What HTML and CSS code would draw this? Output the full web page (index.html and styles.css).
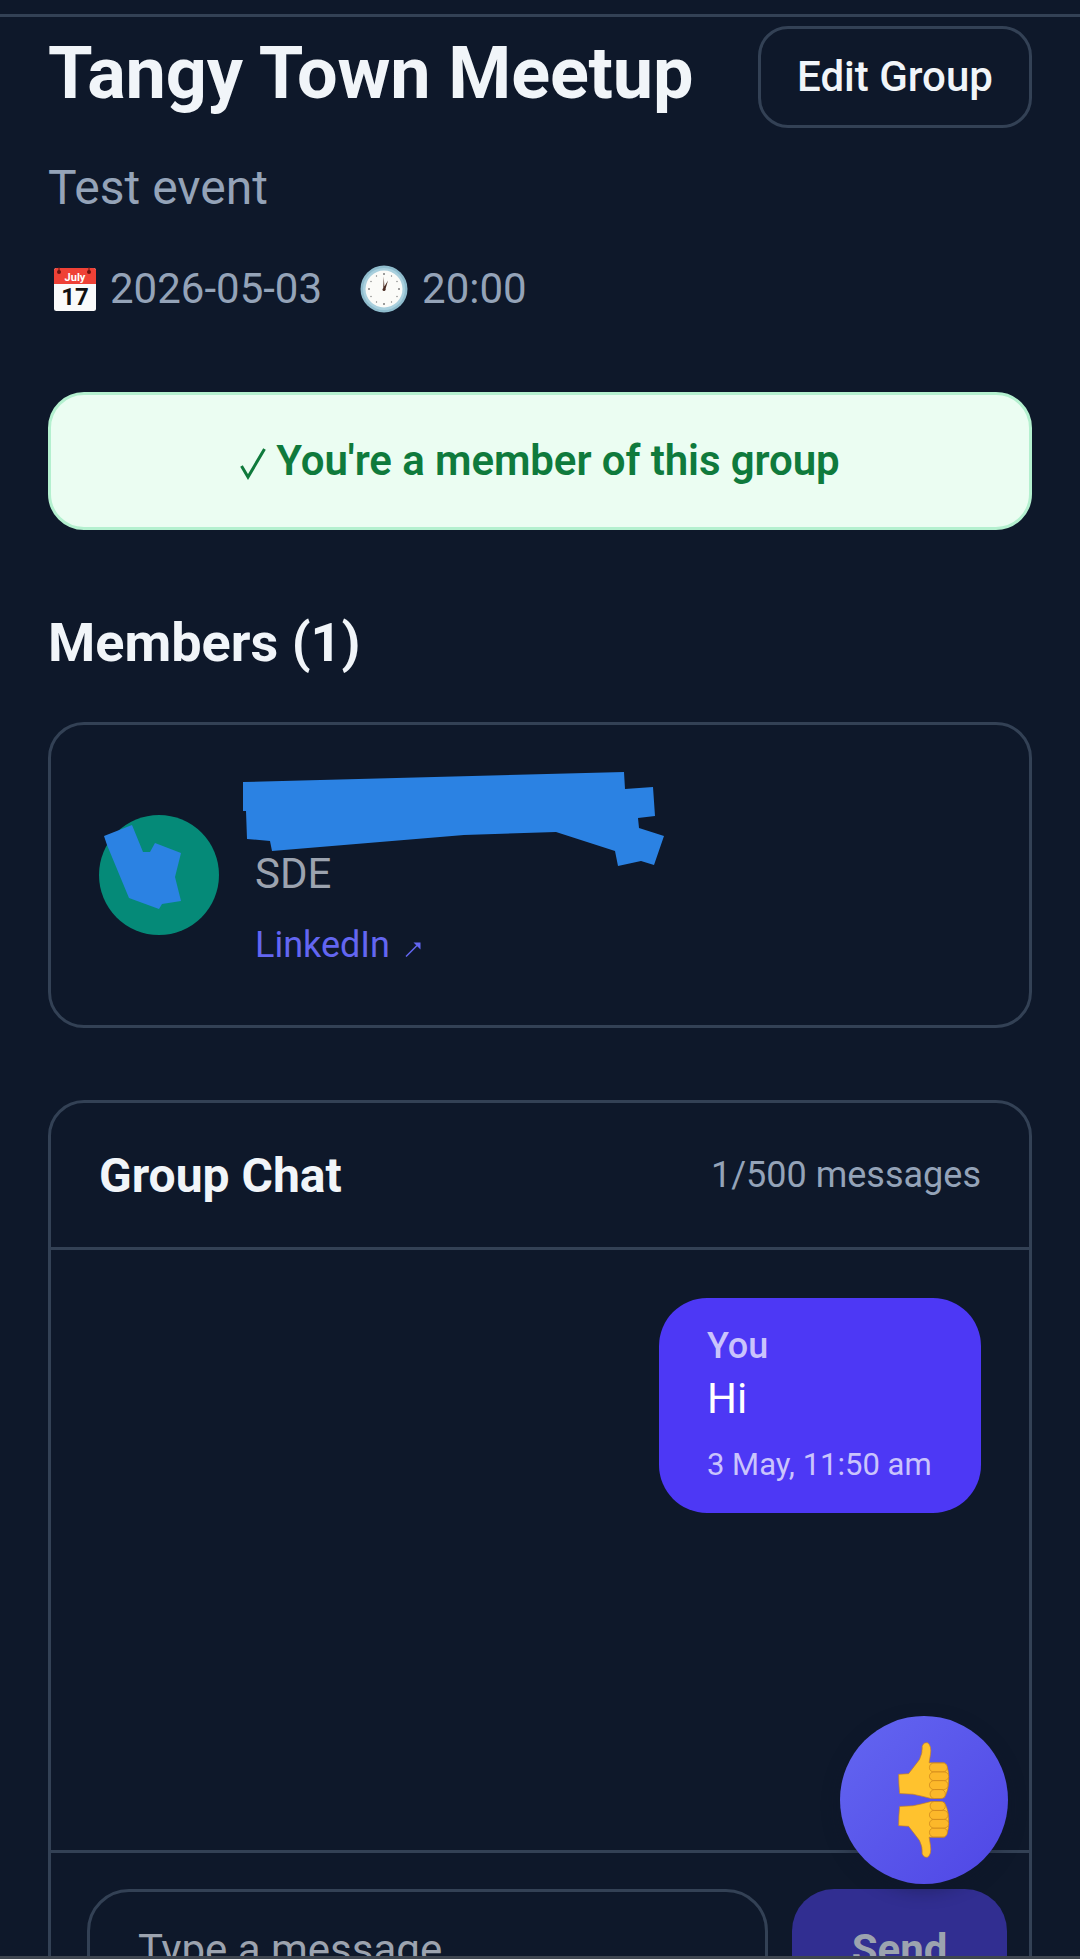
FILE: index.html
```html
<!DOCTYPE html>
<html lang="en">
  <head>
    <meta charset="UTF-8" />
    <title>Tangy Town Meetup</title>
    <link rel="stylesheet" href="styles.css">
  </head>
  <body>
    <div class="topbar"></div>

    <main class="page">
      <header class="head">
        <h1>Tangy Town Meetup</h1>
        <button class="edit-btn">Edit Group</button>
      </header>
      <p class="desc">Test event</p>

      <div class="when">
        <span class="when-item">
          <svg class="ico-cal" viewBox="0 0 42 44">
            <rect x="0" y="1" width="42" height="43" rx="2.500" fill="#fafafa"/>
            <path d="M0 17V3.500a2.500 2.500 0 0 1 2.500-2.500h37a2.500 2.500 0 0 1 2.500 2.500V17z" fill="#ef4136"/>
            <path d="M5 0v5M35 0v5" stroke="#5a1510" stroke-width="1"/>
            <circle cx="5" cy="5" r="2" fill="#6b1410"/>
            <circle cx="35" cy="5" r="2" fill="#6b1410"/>
            <text x="21" y="14" class="cal-month">July</text>
            <text x="21" y="38" class="cal-day">17</text>
          </svg>
          2026-05-03
        </span>
        <span class="when-item">
          <svg class="ico-clock" viewBox="0 0 48 48">
            <circle cx="24" cy="24" r="23.500" fill="#8fbccd"/>
            <circle cx="24" cy="24" r="21" fill="#a9d0de"/>
            <circle cx="24" cy="24" r="18.500" fill="#fbfbf8"/>
            <g fill="#7c7c7c">
              <circle cx="24" cy="9" r="1"/><circle cx="31.500" cy="11" r=".7"/><circle cx="37" cy="16.500" r=".7"/>
              <circle cx="39" cy="24" r="1"/><circle cx="37" cy="31.500" r=".7"/><circle cx="31.500" cy="37" r=".7"/>
              <circle cx="24" cy="39" r="1"/><circle cx="16.500" cy="37" r=".7"/><circle cx="11" cy="31.500" r=".7"/>
              <circle cx="9" cy="24" r="1"/><circle cx="11" cy="16.500" r=".7"/><circle cx="16.500" cy="11" r=".7"/>
            </g>
            <path d="M23.200 24.500L23.700 11.500 24.600 24.500zM23.200 23.500L28 15.500 25.200 25z" fill="#4a2b22"/>
            <circle cx="24" cy="24.500" r="1.500" fill="#4a2b22"/>
          </svg>
          20:00
        </span>
      </div>

      <div class="member-note">
        <svg class="ico-check" viewBox="0 0 26 32">
          <path d="M1.500 18L8 29 24.500 1" fill="none" stroke="#0f7a3c" stroke-width="3"/>
        </svg>
        You're a member of this group
      </div>

      <h2 class="section-title">Members (1)</h2>

      <section class="member-card">
        <div class="avatar"></div>
        <div class="member-info">
          <div class="member-name">&nbsp;</div>
          <div class="member-role">SDE</div>
          <a class="member-link" href="#">LinkedIn
            <svg class="ico-out" viewBox="0 0 16 16">
              <path d="M1 15.500L12 4.500" fill="none" stroke="#6366f1" stroke-width="1.500"/>
              <path d="M8.500 1.500H15.500V8.500z" fill="#6366f1"/>
            </svg>
          </a>
        </div>
      </section>

      <section class="chat">
        <div class="chat-head">
          <h3>Group Chat</h3>
          <span class="chat-count">1/500 messages</span>
        </div>
        <div class="chat-body">
          <div class="bubble">
            <div class="bubble-who">You</div>
            <div class="bubble-text">Hi</div>
            <div class="bubble-time">3 May, 11:50 am</div>
          </div>
        </div>
        <div class="chat-form">
          <div class="chat-input">Type a message...</div>
          <button class="send-btn">Send</button>
        </div>
      </section>
    </main>

    <!-- scribbled-out bits of the screenshot, page coordinates -->
    <svg class="redact" viewBox="0 0 1080 1959">
      <path d="M243 782L624 772 625 789 653 787 655 816 638 818 639 828 664 836 654 865 641 861 618 866 615 851 556 832 464 835 272 851 270 841 247 839 246 811 243 811z" fill="#2b82e3"/>
      <path d="M104 836L132 825 143 852 150 852 155 843 181 853 175 877 181 901 162 904 159 909 129 898 107 845z" fill="#2b82e3"/>
    </svg>

    <button class="fab">
      <svg class="ico-thumbs" viewBox="40 30 157 355">
        <defs>
          <g id="hand">
            <path d="M42 130L72 128Q90 105 105 85 115 65 113 45 118 32 130 35 142 45 138 70L134 95H180Q193 110 193 135 195 175 180 200L140 203Q110 195 85 190L45 188Q42 160 42 130z" fill="#ffc22e" stroke="#c9801a" stroke-width="2"/>
            <g fill="#fcb82a" stroke="#c9801a" stroke-width="2">
              <rect x="135" y="96" width="54" height="27" rx="13"/>
              <rect x="135" y="123" width="58" height="26" rx="13"/>
              <rect x="135" y="149" width="56" height="27" rx="13"/>
              <rect x="137" y="176" width="46" height="27" rx="13"/>
            </g>
          </g>
        </defs>
        <use href="#hand"/>
        <use href="#hand" transform="translate(0 415) scale(1 -1)"/>
      </svg>
    </button>

    <div class="bottom-edge"></div>
  </body>
</html>
```

FILE: styles.css
```css
:root {
  --bg: #0e182a;
  --line: #334155;
  --muted: #94a3b8;
  --primary: #6366f1;
}
* {
  box-sizing: border-box;
}
html, body {
  height: 1959px;
  overflow: hidden;
}
body {
  position: relative;
  margin: 0;
  background: var(--bg);
  color: #f1f5f9;
  font-family: Roboto, "Noto Sans", sans-serif;
}
.topbar {
  height: 17px;
  border-bottom: 3px solid var(--line);
}
.page {
  padding: 9px 48px 0;
}
.head {
  display: flex;
  justify-content: space-between;
  align-items: flex-start;
}
h1 {
  margin: 6px 0 0;
  font-size: 72px;
  line-height: 84px;
  font-weight: 700;
  letter-spacing: -.15px;
}
.edit-btn {
  width: 274px;
  height: 102px;
  padding: 0 0 2px;
  background: transparent;
  border: 3px solid var(--line);
  border-radius: 30px;
  color: #f1f5f9;
  font: 500 42px Roboto, sans-serif;
}
.desc {
  margin: 32px 0 0;
  color: var(--muted);
  font-size: 48px;
  line-height: 56px;
}
.when {
  display: flex;
  gap: 38px;
  margin-top: 48px;
  color: var(--muted);
  font-size: 42px;
  line-height: 50px;
}
.when-item {
  display: flex;
  align-items: center;
  gap: 14px;
}
.ico-cal {
  width: 42px;
  height: 44px;
  margin-left: 6px;
}
.cal-month {
  font: 700 11px Roboto, sans-serif;
  fill: #fff;
  text-anchor: middle;
}
.cal-day {
  font: 700 24px Roboto, sans-serif;
  fill: #111;
  text-anchor: middle;
}
.ico-clock {
  width: 48px;
  height: 48px;
}
.member-note {
  display: flex;
  justify-content: center;
  align-items: center;
  gap: 10px;
  height: 138px;
  margin-top: 78px;
  padding-bottom: 2px;
  background: #ebfdf2;
  border: 3px solid #b4f0cf;
  border-radius: 36px;
  color: #0f7a3c;
  font-size: 42px;
  font-weight: 600;
  letter-spacing: -.08px;
}
.ico-check {
  width: 26px;
  height: 32px;
  margin-top: 8px;
}
.section-title {
  margin: 81px 0 0;
  font-size: 54px;
  line-height: 64px;
  font-weight: 700;
}
.member-card {
  display: flex;
  align-items: center;
  gap: 36px;
  height: 306px;
  margin-top: 47px;
  padding: 0 48px;
  border: 3px solid var(--line);
  border-radius: 36px;
}
.avatar {
  flex: none;
  width: 120px;
  height: 120px;
  border-radius: 50%;
  background: #058a78;
}
.member-name {
  height: 59px;
  font-size: 48px;
}
.member-role {
  margin-top: 6px;
  color: #9ca3af;
  font-size: 42px;
  line-height: 50px;
}
.member-link {
  display: inline-block;
  margin-top: 25px;
  color: var(--primary);
  font-size: 36px;
  line-height: 42px;
  text-decoration: none;
}
.ico-out {
  width: 16px;
  height: 16px;
  margin-left: 6px;
  vertical-align: 0;
}
.chat {
  height: 900px;
  margin-top: 72px;
  border: 3px solid var(--line);
  border-radius: 36px 36px 0 0;
}
.chat-head {
  display: flex;
  justify-content: space-between;
  align-items: center;
  height: 147px;
  padding: 0 48px;
  border-bottom: 3px solid var(--line);
}
.chat-head h3 {
  margin: 0;
  font-size: 48px;
  font-weight: 700;
}
.chat-count {
  color: var(--muted);
  font-size: 36px;
}
.chat-body {
  display: flex;
  justify-content: flex-end;
  align-items: flex-start;
  height: 603px;
  padding: 48px;
  border-bottom: 3px solid var(--line);
}
.bubble {
  width: 322px;
  height: 215px;
  padding: 27px 48px;
  background: #4d38f5;
  border-radius: 48px;
}
.bubble-who {
  color: #cac4fc;
  font-size: 36px;
  line-height: 42px;
  font-weight: 500;
}
.bubble-text {
  margin-top: 7px;
  color: #fff;
  font-size: 42px;
  line-height: 50px;
}
.bubble-time {
  margin-top: 22px;
  color: #cac4fc;
  font-size: 31px;
  line-height: 38px;
}
.chat-form {
  display: flex;
  gap: 24px;
  padding: 36px 22px 0 36px;
}
.chat-input {
  display: flex;
  align-items: center;
  flex: 1;
  height: 120px;
  padding: 0 48px;
  border: 3px solid var(--line);
  border-radius: 42px;
  color: #9ca3af;
  font-size: 42px;
}
.send-btn {
  width: 215px;
  height: 120px;
  padding: 0;
  background: #312e91;
  border: 0;
  border-radius: 42px;
  color: #9ca3af;
  font: 700 42px Roboto, sans-serif;
}
.redact {
  position: absolute;
  top: 0;
  left: 0;
  width: 1080px;
  height: 1959px;
  pointer-events: none;
}
.fab {
  position: absolute;
  top: 1716px;
  left: 840px;
  display: flex;
  justify-content: center;
  align-items: center;
  width: 168px;
  height: 168px;
  padding: 0;
  border: 0;
  border-radius: 50%;
  background: linear-gradient(135deg, #6366f1, #4f46e5);
  box-shadow: 0 6px 18px rgba(15, 23, 42, .4);
}
.ico-thumbs {
  width: 52px;
  height: 118px;
}
.bottom-edge {
  position: absolute;
  left: 0;
  right: 0;
  bottom: 0;
  height: 3px;
  background: #3f4650;
}
```
